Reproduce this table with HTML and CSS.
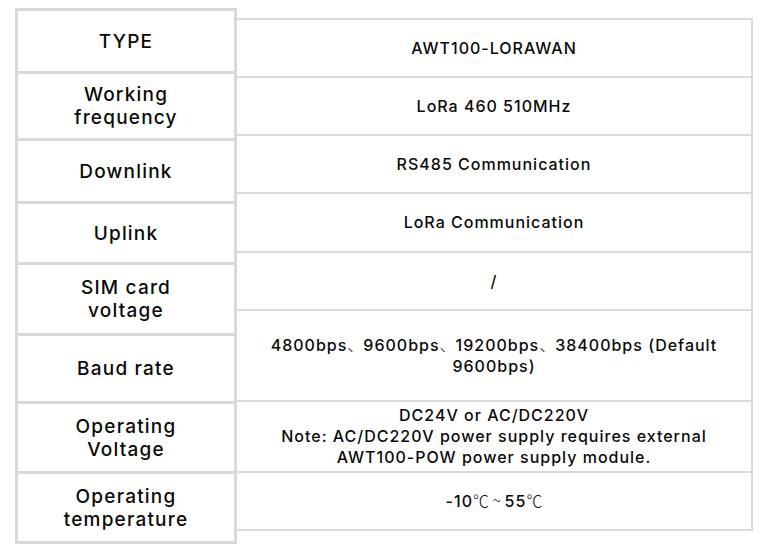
FILE: index.html
```html
<!DOCTYPE html>
<html>
<head>
<meta charset="utf-8">
<link rel="stylesheet" href="styles.css">
</head>
<body>
<div class="page">
  <div class="labels">
    <div class="lcell l1"><span>TYPE</span></div>
    <div class="lcell l2"><span>Working<br>frequency</span></div>
    <div class="lcell l3"><span>Downlink</span></div>
    <div class="lcell l4"><span>Uplink</span></div>
    <div class="lcell l5"><span>SIM card<br>voltage</span></div>
    <div class="lcell l6"><span>Baud rate</span></div>
    <div class="lcell l7"><span>Operating<br>Voltage</span></div>
    <div class="lcell l8"><span>Operating<br>temperature</span></div>
  </div>
  <div class="values">
    <div class="vcell v1"><span>AWT100-LORAWAN</span></div>
    <div class="vcell v2"><span>LoRa 460 510MHz</span></div>
    <div class="vcell v3"><span>RS485 Communication</span></div>
    <div class="vcell v4"><span>LoRa Communication</span></div>
    <div class="vcell v5"><span>/</span></div>
    <div class="vcell v6"><span>4800bps<span class="cjk">、</span>9600bps<span class="cjk">、</span>19200bps<span class="cjk">、</span>38400bps (Default<br>9600bps)</span></div>
    <div class="vcell v7"><span>DC24V or AC/DC220V<br>Note: AC/DC220V power supply requires external<br>AWT100-POW power supply module.</span></div>
    <div class="vcell v8"><span>-10<span class="cjk">℃ ~ </span>55<span class="cjk">℃</span></span></div>
  </div>
</div>
</body>
</html>
```

FILE: styles.css
```css
html, body {
  margin: 0;
  background: #ffffff;
}
body {
  font-family: "Inter", "Noto Sans CJK SC", sans-serif;
  color: #0a0a0a;
  font-weight: 500;
}
.page {
  display: flex;
  align-items: flex-start;
  padding: 8px 0 0 15px;
}
.labels {
  width: 222px;
  box-sizing: border-box;
  border: 3px solid #d9d9d9;
}
.lcell {
  display: flex;
  align-items: center;
  justify-content: center;
  text-align: center;
  font-size: 19px;
  line-height: 23px;
  letter-spacing: 1.2px;
}
.lcell + .lcell {
  border-top: 3px solid #d9d9d9;
}
.l1 { height: 60px; }
.l2 { height: 64px; }
.l3 { height: 60px; }
.l4 { height: 58px; }
.l5 { height: 68px; }
.l6 { height: 65px; }
.l7 { height: 67px; }
.l8 { height: 67px; }

.values {
  margin-top: 10px;
  width: 516px;
  box-sizing: border-box;
  border: 2px solid #dadada;
  border-left: 0;
}
.vcell {
  display: flex;
  align-items: center;
  justify-content: center;
  text-align: center;
  font-size: 16px;
  line-height: 21px;
  letter-spacing: 1px;
}
.vcell + .vcell {
  border-top: 2px solid #dadada;
}
.v1 { height: 56px; }
.v2 { height: 56px; }
.v3 { height: 56px; }
.v4 { height: 57px; }
.v5 { height: 56px; }
.v6 { height: 89px; }
.v7 { height: 69px; }
.v8 { height: 56px; }
.cjk {
  font-family: "Noto Sans CJK SC", sans-serif;
  font-weight: 300;
  letter-spacing: 0;
}
```
